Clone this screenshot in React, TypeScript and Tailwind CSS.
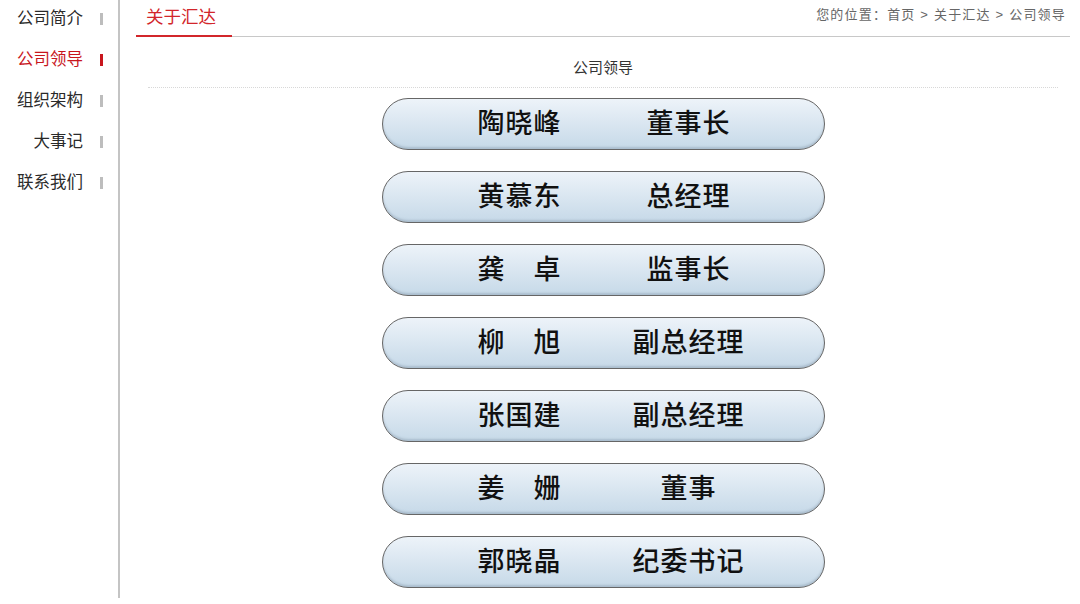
const menu = [
  { label: "公司简介", active: false },
  { label: "公司领导", active: true },
  { label: "组织架构", active: false },
  { label: "大事记", active: false },
  { label: "联系我们", active: false },
]

const leaders = [
  { name: "陶晓峰", title: "董事长" },
  { name: "黄慕东", title: "总经理" },
  { name: "龚　卓", title: "监事长" },
  { name: "柳　旭", title: "副总经理" },
  { name: "张国建", title: "副总经理" },
  { name: "姜　姗", title: "董事" },
  { name: "郭晓晶", title: "纪委书记" },
]

function Sidebar() {
  return (
    <aside className="w-[120px] shrink-0 h-[598px] border-r-2 border-[#c4c4c4]">
      <ul className="-mt-[2px]">
        {menu.map((item) => (
          <li key={item.label} className="h-[41px] flex items-center">
            <span
              className={`w-[83px] text-right text-[16.5px] ${item.active ? "text-[#c8161d]" : "text-[#2a2a2a]"}`}
            >
              {item.label}
            </span>
            <span
              className={`ml-[17px] w-[3px] h-[12px] ${item.active ? "bg-[#c8161d]" : "bg-[#bdbdbd]"}`}
            />
          </li>
        ))}
      </ul>
    </aside>
  )
}

function LeaderPill({ name, title }: { name: string; title: string }) {
  return (
    <div className="w-[443px] h-[52px] rounded-full border border-[#666] bg-gradient-to-b from-[#edf3f9] to-[#c6d9e8] shadow-[inset_0_-2px_2px_rgba(90,110,130,0.25)] flex items-center pl-[94px] text-[#111]">
      <span className="w-[86px] text-[27px] font-medium tracking-[1px] text-center">{name}</span>
      <span className="ml-[64px] w-[124px] text-[27px] font-medium tracking-[1px] text-center">{title}</span>
    </div>
  )
}

export default function App() {
  return (
    <div
      className="w-[1080px] h-[604px] bg-white flex overflow-hidden"
      style={{ fontFamily: '"Liberation Sans", "Noto Sans CJK SC", sans-serif' }}
    >
      <Sidebar />
      <main className="flex-1 pl-[16px] pr-[10px]">
        {/* header */}
        <div className="h-[37px] flex items-end justify-between border-b border-[#c8c8c8]">
          <div className="w-[96px] h-[37px] -mb-px border-b-2 border-[#d2262b] pl-[10px] flex items-center">
            <span className="text-[17.5px] text-[#d2262b] pb-[1px]">关于汇达</span>
          </div>
          <div className="text-[13px] tracking-[1.2px] text-[#666] pb-[12px] pr-[4px] whitespace-pre">
            您的位置：首页 &gt; 关于汇达 &gt; 公司领导
          </div>
        </div>

        <h2 className="text-center text-[15px] text-[#333] pt-[20px] h-[50px]">公司领导</h2>
        <div className="mx-[12px] border-t border-dotted border-[#d8d8d8]" />

        <div className="flex flex-col items-center gap-[21px] pt-[10px]">
          {leaders.map((l) => (
            <LeaderPill key={l.name} name={l.name} title={l.title} />
          ))}
        </div>
      </main>
    </div>
  )
}
